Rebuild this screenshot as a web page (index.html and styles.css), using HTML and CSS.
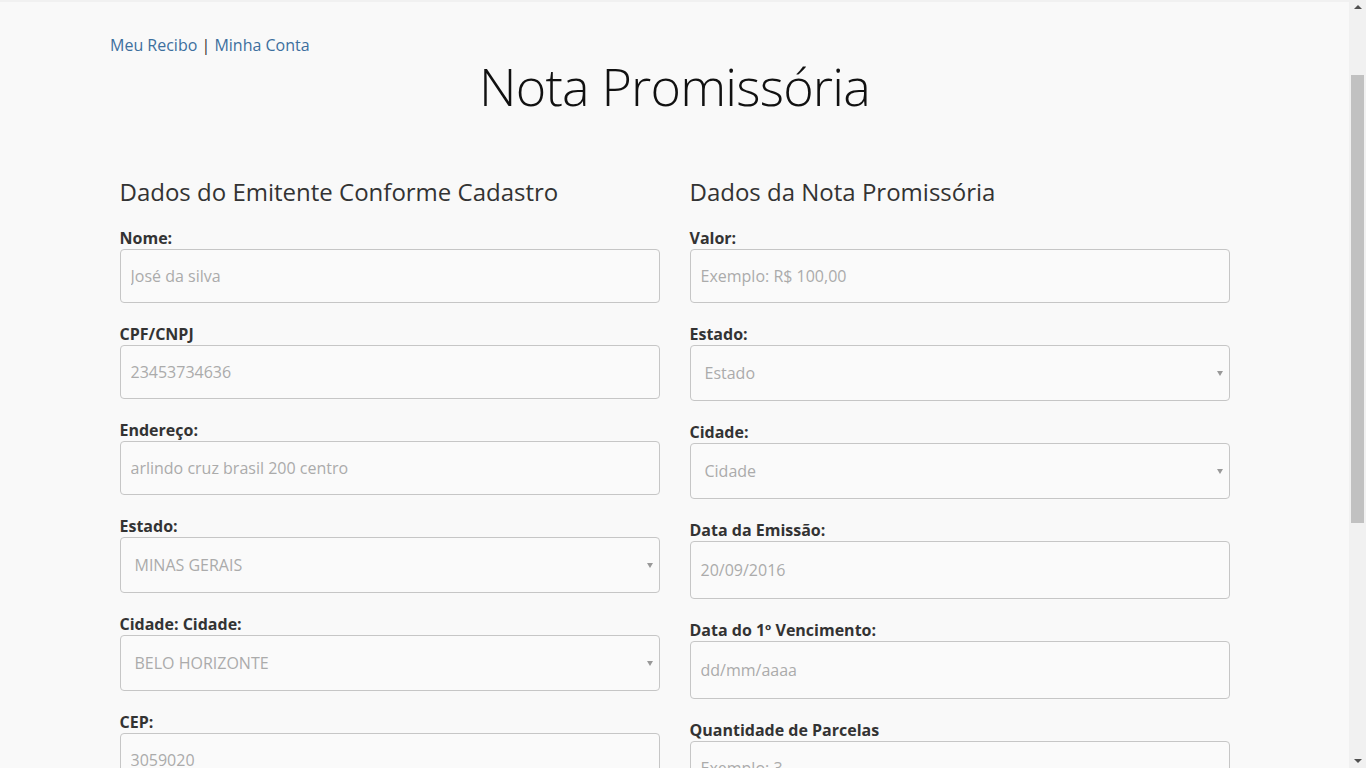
FILE: index.html
```html
<!DOCTYPE html>
<html lang="pt-BR">
<head>
<meta charset="utf-8">
<title>Nota Promissória</title>
<link rel="stylesheet" href="styles.css">
</head>
<body>
<div class="page">
  <nav class="top-links"><a href="#">Meu Recibo</a> | <a href="#">Minha Conta</a></nav>
  <h1 class="title">Nota Promissória</h1>
  <div class="columns">
    <section class="col">
      <h2 class="col-title">Dados do Emitente Conforme Cadastro</h2>
      <div class="field">
        <label>Nome:</label>
        <input class="control" type="text" placeholder="José da silva">
      </div>
      <div class="field">
        <label>CPF/CNPJ</label>
        <input class="control" type="text" placeholder="23453734636">
      </div>
      <div class="field">
        <label>Endereço:</label>
        <input class="control" type="text" placeholder="arlindo cruz brasil 200 centro">
      </div>
      <div class="field">
        <label>Estado:</label>
        <div class="select-wrap"><select class="control select"><option>MINAS GERAIS</option></select></div>
      </div>
      <div class="field">
        <label>Cidade: Cidade:</label>
        <div class="select-wrap"><select class="control select"><option>BELO HORIZONTE</option></select></div>
      </div>
      <div class="field">
        <label>CEP:</label>
        <input class="control" type="text" placeholder="3059020">
      </div>
    </section>
    <section class="col">
      <h2 class="col-title">Dados da Nota Promissória</h2>
      <div class="field">
        <label>Valor:</label>
        <input class="control" type="text" placeholder="Exemplo: R$ 100,00">
      </div>
      <div class="field">
        <label>Estado:</label>
        <div class="select-wrap"><select class="control select"><option>Estado</option></select></div>
      </div>
      <div class="field">
        <label>Cidade:</label>
        <div class="select-wrap"><select class="control select"><option>Cidade</option></select></div>
      </div>
      <div class="field">
        <label>Data da Emissão:</label>
        <input class="control date" type="text" placeholder="20/09/2016">
      </div>
      <div class="field">
        <label>Data do 1º Vencimento:</label>
        <input class="control date" type="text" placeholder="dd/mm/aaaa">
      </div>
      <div class="field">
        <label>Quantidade de Parcelas</label>
        <input class="control" type="text" placeholder="Exemplo: 3">
      </div>
    </section>
  </div>
</div>
<div class="scrollbar">
  <span class="arrow up"></span>
  <span class="thumb"></span>
  <span class="arrow down"></span>
</div>
</body>
</html>
```

FILE: styles.css
```css
html, body {
  margin: 0;
  padding: 0;
  height: 100%;
  overflow: hidden;
}
body {
  background: #f9f9f9;
  font-family: "Open Sans", "Liberation Sans", sans-serif;
  color: #333;
  border-top: 2px solid #f1f1f1;
  box-sizing: border-box;
}
.page {
  width: 1349px;
}
.top-links {
  padding: 32px 0 0 110px;
  font-size: 16px;
  line-height: 22px;
  color: #333;
}
.top-links a {
  color: #3d6f9e;
  text-decoration: none;
}
.title {
  margin: -10px 0 0;
  text-align: center;
  font-size: 52px;
  font-weight: 300;
  line-height: 80px;
  color: #111;
  letter-spacing: -0.8px;
}
.columns {
  width: 1110px;
  margin: 49px auto 0;
  display: grid;
  grid-template-columns: 1fr 1fr;
  column-gap: 30px;
}
.col-title {
  margin: 0 0 18px;
  font-size: 24px;
  font-weight: 400;
  line-height: 34px;
  color: #333;
}
.field {
  margin-bottom: 20px;
}
.field label {
  display: block;
  font-size: 16px;
  font-weight: 700;
  line-height: 22px;
  color: #333;
}
.control {
  display: block;
  box-sizing: border-box;
  width: 100%;
  height: 54px;
  margin: 0;
  padding: 0 10px;
  border: 1px solid #c6c6c6;
  border-radius: 4px;
  background: #fafafa;
  font-family: "Open Sans", "Liberation Sans", sans-serif;
  font-size: 16px;
  color: #555;
  outline: none;
}
.control::placeholder {
  color: #ababab;
}
.date {
  height: 58px;
}
.select-wrap {
  position: relative;
}
.select {
  height: 56px;
  padding: 0 14px;
  appearance: none;
  -webkit-appearance: none;
  color: #ababab;
}
.select-wrap::after {
  content: "";
  position: absolute;
  right: 7px;
  top: 26px;
  border-left: 3px solid transparent;
  border-right: 3px solid transparent;
  border-top: 5px solid #999;
}
.scrollbar {
  position: fixed;
  top: 0;
  right: 0;
  width: 17px;
  height: 768px;
  background: #f1f1f1;
}
.thumb {
  position: absolute;
  left: 2px;
  width: 13px;
  top: 75px;
  height: 448px;
  background: #c1c1c1;
}
.arrow {
  position: absolute;
  left: 5px;
  border-left: 4px solid transparent;
  border-right: 4px solid transparent;
}
.arrow.up {
  top: 5px;
  border-bottom: 4px solid #505050;
}
.arrow.down {
  bottom: 5px;
  border-top: 4px solid #505050;
}
```
